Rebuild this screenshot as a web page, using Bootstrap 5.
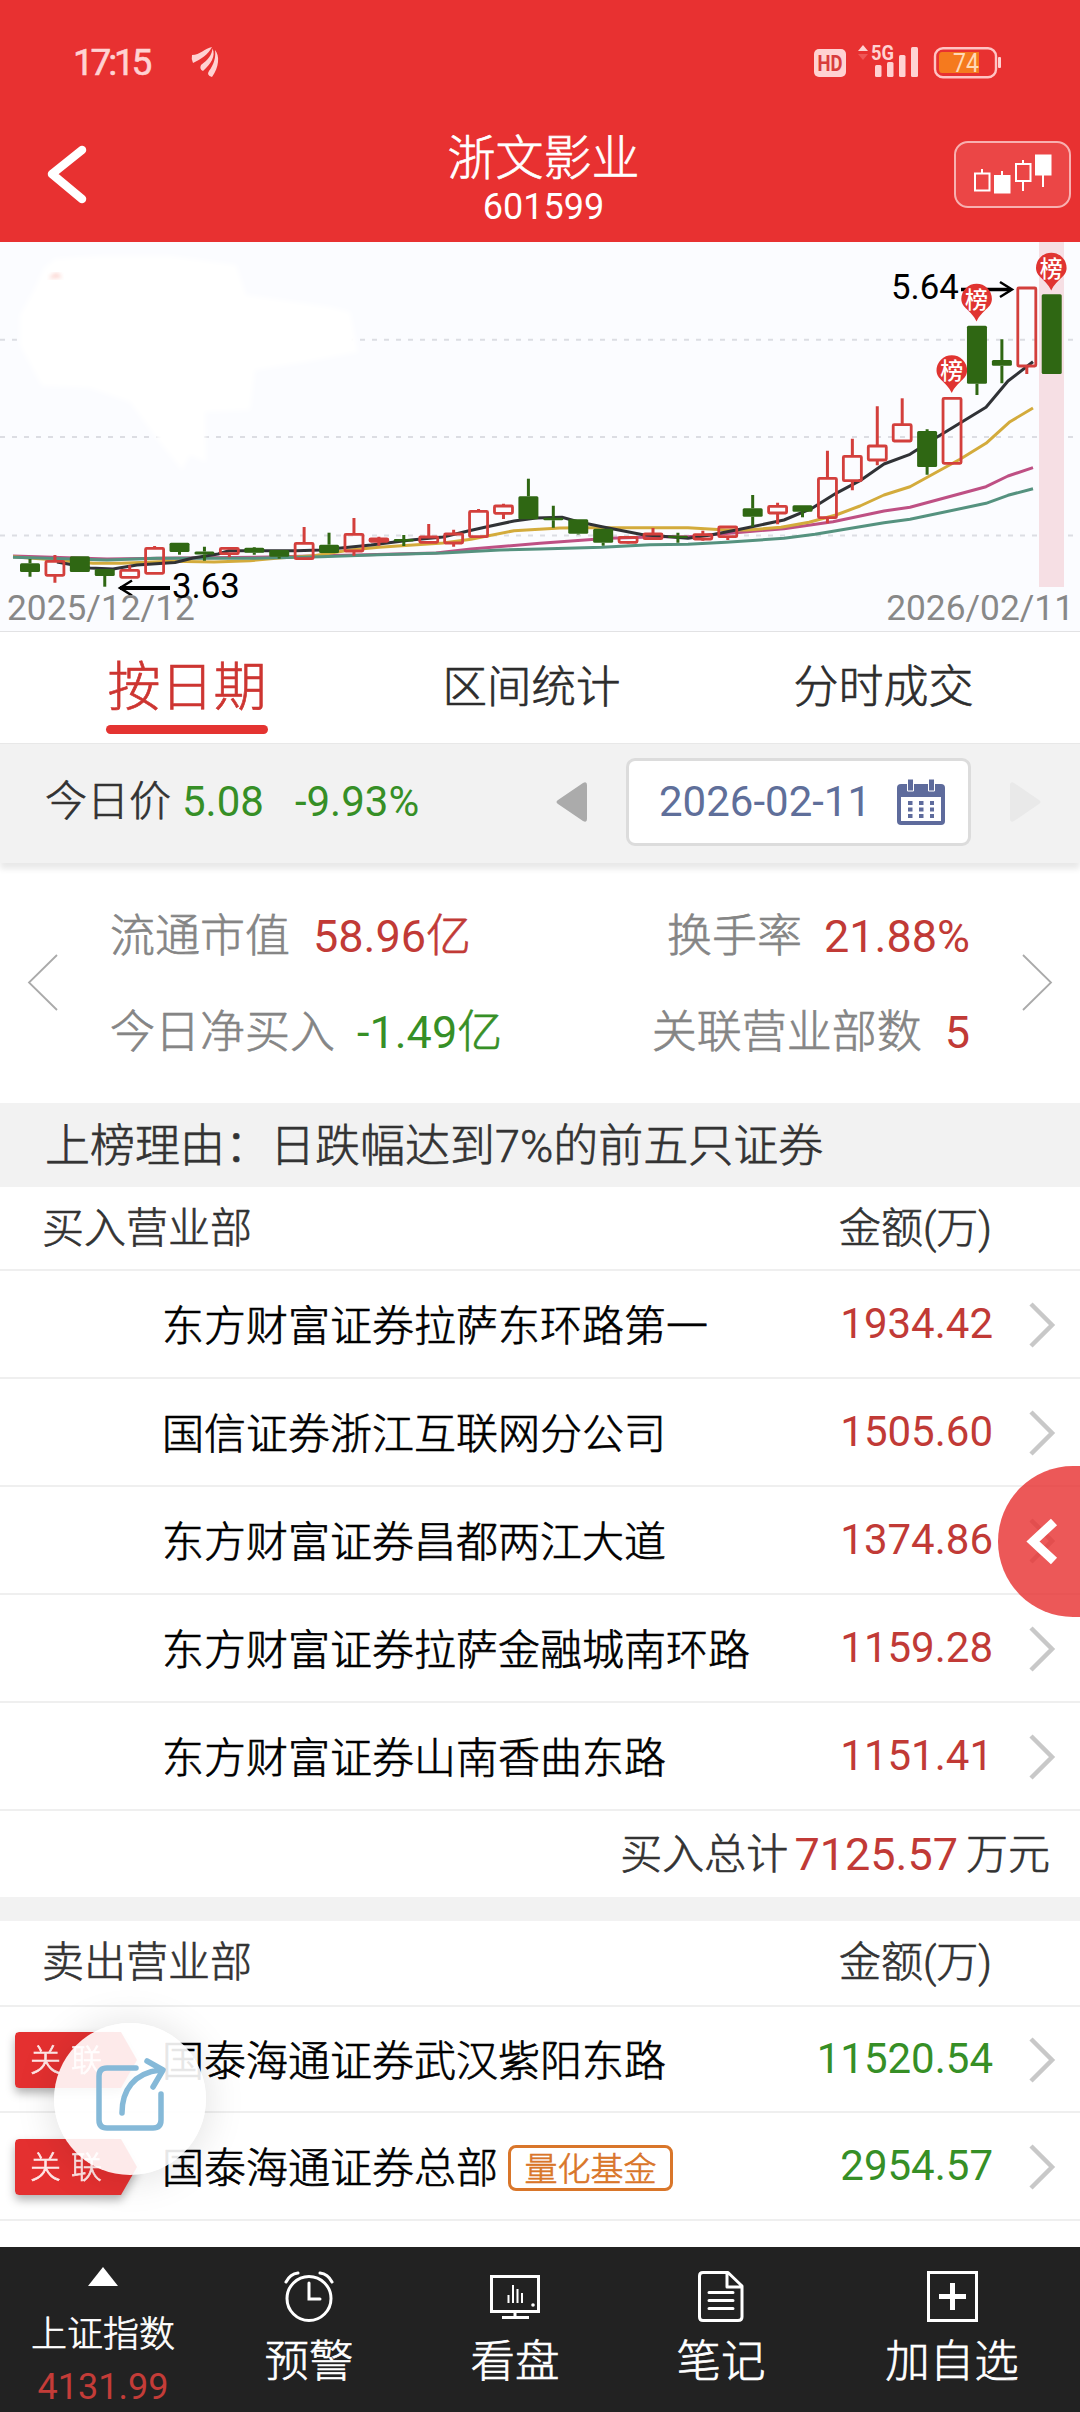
<!DOCTYPE html>
<html lang="zh-CN">
<head>
<meta charset="utf-8">
<meta name="viewport" content="width=device-width, initial-scale=1">
<title>浙文影业 601599</title>
<link href="https://cdn.jsdelivr.net/npm/bootstrap@5.3.0/dist/css/bootstrap.min.css" rel="stylesheet">
<style>
  body { font-family: Roboto, "Noto Sans CJK SC", sans-serif; font-weight: 400; color: #333; background: #fff; width: 1080px; height: 2412px; overflow: hidden; line-height: 1.2; font-size: 42px; }
  svg { display: block; flex: none; overflow: visible; }
  .cjk { font-weight: 300; -webkit-text-stroke: .65px currentColor; }
  .top-area { height: 242px; background: #e83131; }
  .status { height: 124px; padding: 0 79px 0 73px; color: #ffd2d2; }
  .clock-text { font-size: 37px; letter-spacing: -3.2px; line-height: 40px; width: 119px; padding-top: 1px; -webkit-text-stroke: .6px currentColor; }
  .title-bar { height: 118px; padding: 0 9px 0 48px; }
  .title-mid { margin-top: -7px; }
  .stock-name { font-size: 48px; line-height: 54px; }
  .stock-code { font-size: 36px; line-height: 42px; }
  .kline-btn { width: 117px; height: 67px; border: 2px solid #f8b0b0; border-radius: 14px; background: #eb4646; margin-top: -17px; }
  .chart-box { height: 390px; background: #fbfcff; border-bottom: 1px solid #e2e2e4; }
  .tabs-row { height: 111px; }
  .tab-a { width: 374px; font-size: 53px; color: #cd3531; }
  .tab-b { width: 315px; font-size: 44.5px; color: #2d2d2d; }
  .tab-c { width: 389px; font-size: 45px; color: #2d2d2d; }
  .tab-line { width: 162px; height: 9px; border-radius: 5px; background: #e43331; }
  .price-bar { height: 120px; background: #f2f2f2; box-shadow: 0 6px 6px rgba(0,0,0,.09); padding: 0 39px 3px 45px; border-top: 1px solid #e8e8e8; z-index: 1; }
  .dn { color: #368f26 !important; }
  .up { color: #c13a36 !important; }
  .date-box { width: 345px; height: 88px; border: 3px solid #dcdcdc; border-radius: 9px; background: #fff; color: #5f6f9a; padding: 0 23px 0 30px; margin: 0 38px; font-size: 42px; }
  .stats { height: 240px; font-size: 45px; padding: 23px 28px 24px; color: #858585; }
  .stat-body { padding: 5px 53px 0 53px; }
  .stat-line { height: 96px; }
  .reason { height: 84px; background: #f2f2f2; padding: 3px 0 0 45px; font-size: 45px; }
  .sec-head { height: 84px; padding: 3px 88px 0 42px; border-bottom: 2px solid #efefef; }
  .sell-head { height: 86px; padding-bottom: 2px; }
  .dept { height: 108px; border-bottom: 2px solid #efefef; padding: 2px 25px 0 0; color: #000; }
  .dept-short { height: 106px; }
  .flag-col { width: 162px; padding-left: 15px; }
  .flag { width: 122px; height: 56px; }
  .flag-in { width: 122px; height: 56px; background: #e43030; clip-path: polygon(0 4px, 1px 1px, 4px 0, 106px 0, 122px 28px, 106px 56px, 4px 56px, 1px 55px, 0 52px); color: #ffe8e8; font-size: 31px; letter-spacing: 10px; padding-left: 15px; line-height: 57px; }
  .flag { filter: drop-shadow(0 5px 5px rgba(0,0,0,.3)); }
  .dept-name { padding-top: 5px; }
  .amt { width: 200px; padding-bottom: 1px; }
  .arrow { margin-left: 36px; }
  .fund-tag { border: 3px solid #d9762a; border-radius: 8px; color: #d9762a; font-size: 33px; width: 165px; height: 46px; line-height: 43px; margin: 1px 0 0 10px; }
  .total { height: 86px; padding: 2px 30px 0 0; }
  .total-num { font-size: 45px; margin: 0 8px 0 6px; }
  .strip { height: 24px; background: #f2f2f2; }
  .bottom-bar { height: 165px; top: 2247px; left: 0; width: 1080px; background: #222; color: #fff; z-index: 3; }
  .b-item { width: 206px; padding-top: 24px; font-size: 44.5px; }
  .b-wide { width: 256px; }
  .b-label { line-height: 52px; margin-top: 14px; }
  .b-index { padding-top: 20px; }
  .b-index-name { font-size: 36px; line-height: 42px; margin-top: 28px; }
  .b-index-val { font-size: 36px; line-height: 42px; margin-top: 10px; color: #c43c38; }
  .share-float { left: 54px; top: 2023px; width: 152px; height: 152px; border-radius: 50%; background: rgba(255,255,255,.9); box-shadow: 0 2px 40px rgba(0,0,0,.13); z-index: 2; }
  .side-float { left: 998px; top: 1466px; width: 82px; height: 151px; border-radius: 75px 0 0 75px / 75.5px 0 0 75.5px; background: rgba(232,49,49,.81); z-index: 2; }
</style>
<script src="https://cdn.jsdelivr.net/npm/bootstrap@5.3.0/dist/js/bootstrap.bundle.min.js"></script>
</head>
<body class="position-relative">
<header class="top-area">
  <div class="status d-flex align-items-center">
    <div class="clock-text">17:15</div>
    <svg width="27" height="30" viewBox="0 0 27 30" fill="#ffd2d2"><path d="M0 8C8 8 13 1 20 0C16 8 9 12 1 16Q-1 12 0 8Z"/><path d="M9 18C16 13 20 8 20.500 1.500C24 9 19 17 11 24Q7 22 9 18Z"/><path d="M17 24C22 17 24 10 23 3C28 9 27 20 20 30Q14 28 17 24Z"/></svg>
    <svg class="ms-auto" width="188" height="34" viewBox="812 45 188 34">
      <rect x="813" y="49" width="32" height="28" rx="5" fill="#ffd2d2"/>
      <text x="829" y="71" font-size="22" font-weight="700" text-anchor="middle" textLength="25" lengthAdjust="spacingAndGlyphs" fill="#d83c3c">HD</text>
      <path d="M857 51l5-6 5 6z" fill="#ffd2d2"/><path d="M857 54h10l-5 6z" fill="#ef5656"/>
      <text x="870" y="60" font-size="21" font-weight="700" textLength="23" lengthAdjust="spacingAndGlyphs" fill="#ffd2d2">5G</text>
      <g fill="#ffd2d2"><rect x="874" y="65" width="6.500" height="12" rx="1.500"/><rect x="886" y="62" width="6.500" height="15" rx="1.500"/><rect x="898" y="55" width="6.500" height="22" rx="1.500"/><rect x="910" y="47" width="7" height="30" rx="1.500"/><rect x="997" y="57" width="3" height="11" rx="1"/></g>
      <rect x="934" y="48.200" width="61" height="29" rx="8" fill="none" stroke="#ffc4c4" stroke-width="2.400"/>
      <path d="M941 52h37v21h-37q-3 0-3-4V56q0-4 3-4z" fill="#f57a1e"/>
      <text x="952" y="72" font-size="25" textLength="26" lengthAdjust="spacingAndGlyphs" fill="#ffd9b8">74</text>
    </svg>
  </div>
  <div class="title-bar d-flex justify-content-between align-items-center">
    <svg width="85" height="58" viewBox="0 0 85 58" style="margin-top:-17px"><path d="M34 4L4 28 34 53" fill="none" stroke="#fff" stroke-width="8.500" stroke-linecap="round" stroke-linejoin="round"/></svg>
    <div class="title-mid text-center text-white">
      <div class="stock-name cjk">浙文影业</div>
      <div class="stock-code">601599</div>
    </div>
    <div class="kline-btn">
      <svg width="113" height="63" viewBox="956 143 113 63" stroke="#fff" stroke-width="2"><path d="M982 169v4M1002 171v4M1023 160v4M1023 181v10M1043 175v12" /><rect x="975" y="173.500" width="14.500" height="17" fill="none"/><rect x="995" y="176" width="14.500" height="16.500" fill="#fff"/><rect x="1016" y="164" width="14.500" height="17" fill="none"/><rect x="1036" y="155.500" width="14.500" height="19" fill="#fff"/></svg>
    </div>
  </div>
</header>

<section class="chart-box">
  <svg id="kchart" width="1080" height="389" viewBox="0 242 1080 389">
    <defs><filter id="soft"><feGaussianBlur stdDeviation="2"/></filter></defs>
    <g stroke="#dcdde3" stroke-width="2" stroke-dasharray="5 7"><path d="M0 339.700H1074M0 437H1074M0 535.500H1074"/></g>
    <path filter="url(#soft)" fill="#fff" d="M55 259L100 256 170 256 236 265 246 295 330 307 350 312 358 352 300 363 255 370 250 410 205 412 206 462 190 455 182 470 158 440 130 402 90 388 42 386 20 345 20 315 34 290 44 268Z"/>
    <path filter="url(#soft)" d="M49 279Q52 273 58 273L62 278Q56 277 49 279Z" fill="#fbd0cb"/>
    <rect x="1039" y="242" width="25" height="345" fill="#f6dfe4"/>
    <g id="averages" fill="none" stroke-width="3" stroke-linejoin="round">
      <polyline stroke="#be5084" points="13,556 107,559 179,558 268,557 357,555 436,553 471,549 540,543.300 609,538.300 660,536.700 688,536.700 747,531.700 784,528.700 833,521.700 884,511 910,507.300 986,486.700 1008,476 1033,467.700"/>
      <polyline stroke="#d3ab3c" points="13,556.700 46,559.300 93,563.300 121,563.300 171,561.300 214,562 250,560.700 279,558 314,555.700 350,550 379,547.300 443,543 471,539.300 514,530.700 560,528 585,527.700 688,527.700 726,530 747,530 781,527.300 809,522.300 836,515 860,506 884,495 910,486.700 960,459.300 986,443.300 1010,421.700 1033,408"/>
      <polyline stroke="#55927f" points="13,557.300 107,560 157,558.300 250,558.300 321,556.700 379,554.700 443,553 500,550 540,549 602,547.300 650,544.700 688,544.300 726,542.300 784,538.300 815,534.300 860,526.700 884,522.700 910,519.300 986,503.300 1008,495.300 1033,488.700"/>
      <polyline stroke="#303236" points="57,562 90,568 113,569 137,565 175,562.500 193,558 218,554 229,550.700 296,550.700 321,550 371,545 411,540 443,537 468,531 486,527 514,521 536,518 562,517.300 578,521.700 602,526.700 643,534.700 688,538.300 712,534.700 740,529.300 784,520 812,508.300 836,493.300 860,480.700 884,464 910,454.300 936,437.700 986,407.300 1008,381 1033,361.700"/>
    </g>
    <g id="candles"></g>
    <g stroke="#000" fill="none"><path d="M170 588H120" stroke-width="4"/><path d="M132 580.500L120 588l12 7.500" stroke-width="2.500"/><path d="M961 289.500H1010" stroke-width="3.500"/><path d="M1000 282L1012 289.500l-12 7.500" stroke-width="2.500"/></g>
    <g font-size="35.300" fill="#888"><text x="7" y="620">2025/12/12</text><text x="1074" y="620" text-anchor="end">2026/02/11</text></g>
    <g font-size="34.800" fill="#000"><text x="172" y="597.500">3.63</text><text x="891" y="298.700">5.64</text></g>
    <g id="pins"></g>
  </svg>
</section>

<nav class="tabs-row d-flex text-center">
  <div class="tab-a cjk d-flex flex-column align-items-center"><span style="line-height:62px;margin-top:25px;margin-bottom:6px">按日期</span><div class="tab-line"></div></div>
  <div class="tab-b cjk" style="line-height:112px">区间统计</div>
  <div class="tab-c cjk" style="line-height:112px">分时成交</div>
</nav>

<section class="price-bar d-flex align-items-center position-relative">
  <span class="cjk">今日价</span><span class="dn" style="margin-left:11px">5.08</span><span class="dn" style="margin-left:31px">-9.93%</span>
  <svg class="ms-auto" width="32" height="42" viewBox="0 0 32 42"><path d="M2 19L27 2q4-2 4 2v34q0 4-4 2L2 23q-3-2 0-4z" fill="#ababab"/></svg>
  <div class="date-box d-flex align-items-center justify-content-between"><span>2026-02-11</span>
    <svg width="48" height="46" viewBox="0 0 48 46"><path d="M4 5H44a4 4 0 0 1 4 4V42a4 4 0 0 1-4 4H4a4 4 0 0 1-4-4V9a4 4 0 0 1 4-4z" fill="#5e6b9c"/><path d="M4 18H44V42H4z" fill="#fff"/><path d="M10.500 0h6v12h-6zM31.500 0h6v12h-6z" fill="#5e6b9c" stroke="#fff" stroke-width="1"/><path d="M11 24H37M11 30.500H37M11 37H37" stroke="#5e6b9c" stroke-width="4" stroke-dasharray="4.500 6.500"/></svg>
  </div>
  <svg width="32" height="42" viewBox="0 0 32 42"><path d="M30 19L5 2q-4-2-4 2v34q0 4 4 2L30 23q3-2 0-4z" fill="#e9e9e9"/></svg>
</section>

<section class="stats d-flex align-items-center">
  <svg width="29" height="57" viewBox="0 0 29 57"><path d="M29 1L1 28.500 29 56" fill="none" stroke="#aaa" stroke-width="1.800"/></svg>
  <div class="stat-body flex-grow-1">
    <div class="stat-line d-flex align-items-center"><span class="cjk">流通市值</span><span class="up" style="margin-left:23px">58.96<span class="cjk">亿</span></span><span class="cjk ms-auto">换手率</span><span class="up" style="margin-left:22px">21.88%</span></div>
    <div class="stat-line d-flex align-items-center"><span class="cjk">今日净买入</span><span class="dn" style="margin-left:22px">-1.49<span class="cjk">亿</span></span><span class="cjk ms-auto">关联营业部数</span><span class="up" style="margin-left:23px">5</span></div>
  </div>
  <svg width="29" height="57" viewBox="0 0 29 57"><path d="M0 1L28 28.500 0 56" fill="none" stroke="#aaa" stroke-width="1.800"/></svg>
</section>

<div class="reason cjk d-flex align-items-center">上榜理由：日跌幅达到7%的前五只证券</div>

<section>
  <div class="sec-head cjk d-flex align-items-center justify-content-between"><span>买入营业部</span><span>金额(万)</span></div>
  <div class="dept d-flex align-items-center"><div class="flag-col"></div><div class="dept-name cjk">东方财富证券拉萨东环路第一</div><div class="amt up ms-auto text-end">1934.42</div><svg class="arrow" width="26" height="46" viewBox="0 0 26 46"><path d="M2 2L23 23 2 44" fill="none" stroke="#c8c8c8" stroke-width="4.500"/></svg></div>
  <div class="dept d-flex align-items-center"><div class="flag-col"></div><div class="dept-name cjk">国信证券浙江互联网分公司</div><div class="amt up ms-auto text-end">1505.60</div><svg class="arrow" width="26" height="46" viewBox="0 0 26 46"><path d="M2 2L23 23 2 44" fill="none" stroke="#c8c8c8" stroke-width="4.500"/></svg></div>
  <div class="dept d-flex align-items-center"><div class="flag-col"></div><div class="dept-name cjk">东方财富证券昌都两江大道</div><div class="amt up ms-auto text-end">1374.86</div><svg class="arrow" width="26" height="46" viewBox="0 0 26 46"><path d="M2 2L23 23 2 44" fill="none" stroke="#c8c8c8" stroke-width="4.500"/></svg></div>
  <div class="dept d-flex align-items-center"><div class="flag-col"></div><div class="dept-name cjk">东方财富证券拉萨金融城南环路</div><div class="amt up ms-auto text-end">1159.28</div><svg class="arrow" width="26" height="46" viewBox="0 0 26 46"><path d="M2 2L23 23 2 44" fill="none" stroke="#c8c8c8" stroke-width="4.500"/></svg></div>
  <div class="dept d-flex align-items-center"><div class="flag-col"></div><div class="dept-name cjk">东方财富证券山南香曲东路</div><div class="amt up ms-auto text-end">1151.41</div><svg class="arrow" width="26" height="46" viewBox="0 0 26 46"><path d="M2 2L23 23 2 44" fill="none" stroke="#c8c8c8" stroke-width="4.500"/></svg></div>
  <div class="total d-flex align-items-center justify-content-end"><span class="cjk">买入总计</span><span class="total-num up">7125.57</span><span class="cjk">万元</span></div>
</section>
<div class="strip"></div>
<section>
  <div class="sec-head sell-head cjk d-flex align-items-center justify-content-between"><span>卖出营业部</span><span>金额(万)</span></div>
  <div class="dept dept-short d-flex align-items-center"><div class="flag-col"><div class="flag"><div class="flag-in cjk">关联</div></div></div><div class="dept-name cjk">国泰海通证券武汉紫阳东路</div><div class="amt dn ms-auto text-end">11520.54</div><svg class="arrow" width="26" height="46" viewBox="0 0 26 46"><path d="M2 2L23 23 2 44" fill="none" stroke="#c8c8c8" stroke-width="4.500"/></svg></div>
  <div class="dept d-flex align-items-center"><div class="flag-col"><div class="flag"><div class="flag-in cjk">关联</div></div></div><div class="dept-name cjk">国泰海通证券总部</div><div class="fund-tag cjk text-center">量化基金</div><div class="amt dn ms-auto text-end">2954.57</div><svg class="arrow" width="26" height="46" viewBox="0 0 26 46"><path d="M2 2L23 23 2 44" fill="none" stroke="#c8c8c8" stroke-width="4.500"/></svg></div>
</section>

<div class="side-float position-absolute"><svg width="82" height="151" viewBox="998 1466 82 151"><path d="M1054 1522L1033 1541.500 1054 1561" fill="none" stroke="#fff" stroke-width="9"/></svg></div>
<div class="share-float position-absolute"><svg width="152" height="152" viewBox="54 2023 152 152"><g fill="none" stroke="#85b9d8" stroke-width="5.500" stroke-linecap="round" stroke-linejoin="round"><path d="M136 2068H107Q99 2068 99 2076V2120Q99 2128 107 2128H153Q161 2128 161 2120V2094"/><path d="M122 2113C122 2090 134 2073 160 2070M147 2061L163 2070 153 2087"/></g></svg></div>

<footer class="bottom-bar position-absolute d-flex text-center">
  <div class="b-item b-index d-flex flex-column align-items-center"><svg width="30" height="19" viewBox="0 0 30 19"><path d="M15 0L30 19H0z" fill="#fff"/></svg><div class="b-index-name cjk">上证指数</div><div class="b-index-val">4131.99</div></div>
  <div class="b-item cjk d-flex flex-column align-items-center"><svg width="50" height="51" viewBox="0 0 50 51" fill="none" stroke="#fff" stroke-width="3" stroke-linecap="round"><circle cx="25" cy="27.500" r="22"/><path d="M25 12V28H36M2 11Q6 3 14 2M48 11Q44 3 36 2"/></svg><div class="b-label">预警</div></div>
  <div class="b-item cjk d-flex flex-column align-items-center"><svg width="50" height="51" viewBox="0 0 50 51" fill="none" stroke="#fff"><rect x="1.500" y="5.500" width="47" height="35" stroke-width="3"/><path d="M25 41v5M12 46.500H39" stroke-width="3"/><path d="M18.500 32V24M23 32V14M27.500 32V18M32 32V22" stroke-width="2"/><circle cx="43" cy="34" r="1.800" fill="#fff" stroke="none"/></svg><div class="b-label">看盘</div></div>
  <div class="b-item cjk d-flex flex-column align-items-center"><svg width="46" height="51" viewBox="0 0 46 51" fill="none" stroke="#fff" stroke-width="3" stroke-linejoin="round" stroke-linecap="round"><path d="M5 1.500H30L44 15V46Q44 49.500 40 49.500H5Q1.500 49.500 1.500 46V5Q1.500 1.500 5 1.500zM29 3V16H43M11 21.500H35M11 29.500H35M11 37.500H35"/></svg><div class="b-label">笔记</div></div>
  <div class="b-item b-wide cjk d-flex flex-column align-items-center"><svg width="51" height="51" viewBox="0 0 51 51" fill="none" stroke="#fff"><rect x="1.500" y="1.500" width="48" height="48" stroke-width="3"/><path d="M25.500 12V39M12 25.500H39" stroke-width="5"/></svg><div class="b-label">加自选</div></div>
</footer>

<script>
  // [rising, bodyTop, bodyBottom, high, low]
  const days = [
    [0,563.3,572,559,576.7],[1,561.3,575.3,555,582.7],[0,556.3,572,556.3,572],[0,569,576,569,586.7],[1,570.3,577.3,565.3,577.3],
    [1,548.3,573.3,546,573.3],[0,542.7,552,542.7,554.7],[0,551.5,554.5,546.7,560.7],[1,548.3,553.7,548.3,557.3],[0,547.7,552.7,547,554.7],
    [0,550,556.7,550,558.7],[1,543.3,558.7,527,558.7],[0,544.7,553,532.7,553],[1,534.3,551,518,555.7],[1,539,541.3,536.7,545.7],
    [0,539,541.5,535,546],[1,537,542.3,524,542.3],[1,534,543,529.7,546.7],[1,511.3,536.7,509,536.7],[1,506,513.3,503.7,519],
    [0,496.3,519.3,478.7,519.3],[0,517.7,520.3,505.7,527.7],[0,519.3,533.7,519.3,534.5],[0,528.7,542.7,528.7,545.7],[1,537.3,542.3,537.3,543.5],
    [1,534,538.7,528,539],[0,535.7,538,532.7,542.7],[1,534.7,539,530.7,540.7],[1,527,536.7,527,540],[0,508.3,516.7,495,526.7],
    [1,506.3,513,502.7,524.3],[0,505.3,511.7,505.3,517.3],[1,478.3,517.7,450.7,523.3],[1,456.3,480.7,438.7,490.3],[1,446,460,406.3,465.3],
    [1,424.7,441,398.3,441],[0,431,467,429.3,474.7],[1,398.3,463.3,398.3,463.3],[0,325.7,383.7,325.7,395],[0,360,365.7,339.3,383.3],
    [1,288,366,288,374],[0,294.3,374,294.3,374]
  ];
  document.getElementById('candles').innerHTML = days.map(([rise, top, bottom, high, low], i) => {
    const x = 30 + i * 24.92;
    const ink = rise ? '#d33f3c' : '#2f6713';
    const wicks = `<path d="M${x} ${high}V${top}M${x} ${bottom}V${low}" stroke="${ink}" stroke-width="3"/>`;
    const body = rise
      ? `<rect x="${x - 9}" y="${top}" width="18" height="${bottom - top}" rx="1" fill="none" stroke="${ink}" stroke-width="2.800"/>`
      : `<rect x="${x - 10}" y="${top}" width="20" height="${bottom - top}" rx="1.500" fill="${ink}" stroke="none"/>`;
    return wicks + body;
  }).join('');
  document.getElementById('pins').innerHTML = [[976.6, 299], [951.8, 370.5], [1051.3, 268]].map(([x, y]) =>
    `<path d="M${x - 15.3} ${y}a15.300 15.300 0 1 1 30.600 0c0 9-10 11-15.300 22.500c-5.300-11.500-15.300-13.500-15.300-22.500z" fill="#e03431"/>` +
    `<text x="${x}" y="${y + 8.5}" font-size="23" font-weight="500" text-anchor="middle" fill="#fff">榜</text>`).join('');
</script>
</body>
</html>
